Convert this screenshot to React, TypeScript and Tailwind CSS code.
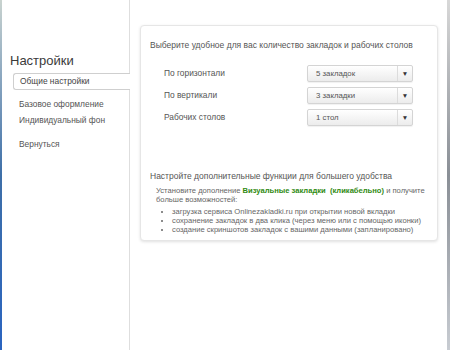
import React from "react";

const selects = [
  { label: "По горизонтали", value: "5 закладок" },
  { label: "По вертикали", value: "3 закладки" },
  { label: "Рабочих столов", value: "1 стол" },
];

const features = [
  "загрузка сервиса Onlinezakladki.ru при открытии новой вкладки",
  "сохранение закладок в два клика (через меню или с помощью иконки)",
  "создание скриншотов закладок с вашими данными (запланировано)",
];

function Select({ value }: { value: string }) {
  return (
    <div className="flex h-[17px] w-[106px] items-center rounded-[2px] border border-[#d4d4d4] bg-gradient-to-b from-white to-[#ececec] shadow-[0_1px_1px_rgba(0,0,0,0.06)]">
      <span className="flex-1 pl-[8px] text-[7.8px] text-[#555]">{value}</span>
      <span className="flex h-full w-[15px] items-center justify-center border-l border-[#dcdcdc] text-[6.5px] text-[#333]">
        ▼
      </span>
    </div>
  );
}

export default function App() {
  return (
    <div
      className="flex h-[350px] w-[450px] bg-white text-[#555]"
      style={{ fontFamily: '"Liberation Sans", Arial, sans-serif' }}
    >
      <div className="w-[2px] bg-gradient-to-b from-[#c9d3cf] via-[#3e6fa8] to-[#2a64c0]" />

      <aside className="flex w-[128px] flex-col border-r border-[#dedede] pt-[52px]">
        <h1 className="pl-[8px] text-[13px] leading-[18px] text-[#3a3a3a]">Настройки</h1>
        <div className="-mr-px ml-[11px] mt-[3px] flex h-[17px] items-center rounded-l-[3px] border border-r-0 border-[#cfcfcf] bg-white pl-[6px] text-[8.4px] text-[#444]">
          Общие настройки
        </div>
        <nav className="mt-[6px] flex flex-col pl-[17px] text-[8.4px] text-[#555]">
          <span className="leading-[16px]">Базовое оформление</span>
          <span className="leading-[16px]">Индивидуальный фон</span>
          <span className="mt-[8px] leading-[16px]">Вернуться</span>
        </nav>
      </aside>

      <main className="flex-1 pl-[10px] pr-[9px] pt-[25px]">
        <section className="h-[216px] rounded-[4px] border border-[#e6e6e6] bg-white px-[9px] pt-[13px] shadow-[0_1px_3px_rgba(0,0,0,0.12)]">
          <p className="text-[8.5px] leading-[12px] text-[#555]">
            Выберите удобное для вас количество закладок и рабочих столов
          </p>
          <div className="mt-[14px] flex flex-col gap-[5px] pl-[14px]">
            {selects.map((s) => (
              <div key={s.label} className="flex items-center justify-between pr-[15px]">
                <span className="text-[8.4px] text-[#555]">{s.label}</span>
                <Select value={s.value} />
              </div>
            ))}
          </div>

          <p className="mt-[44px] text-[8.5px] leading-[12px] text-[#555]">
            Настройте дополнительные функции для большего удобства
          </p>
          <div className="mt-[4px] pl-[6px] text-[7.6px] leading-[9px] text-[#666]">
            <p>
              <span>Установите дополнение </span>
              <span className="font-bold text-[#2f8a12]">Визуальные закладки&nbsp; (кликабельно)</span>
              <span> и получите</span>
              <br />
              <span>больше возможностей:</span>
            </p>
            <ul className="mt-[3px] list-disc pl-[16px]">
              {features.map((f) => (
                <li key={f}>{f}</li>
              ))}
            </ul>
          </div>
        </section>
      </main>

      <div className="w-[3px] bg-gradient-to-b from-[#d8d8d8] via-[#8a8f96] to-[#c8ccd2]" />
    </div>
  );
}
